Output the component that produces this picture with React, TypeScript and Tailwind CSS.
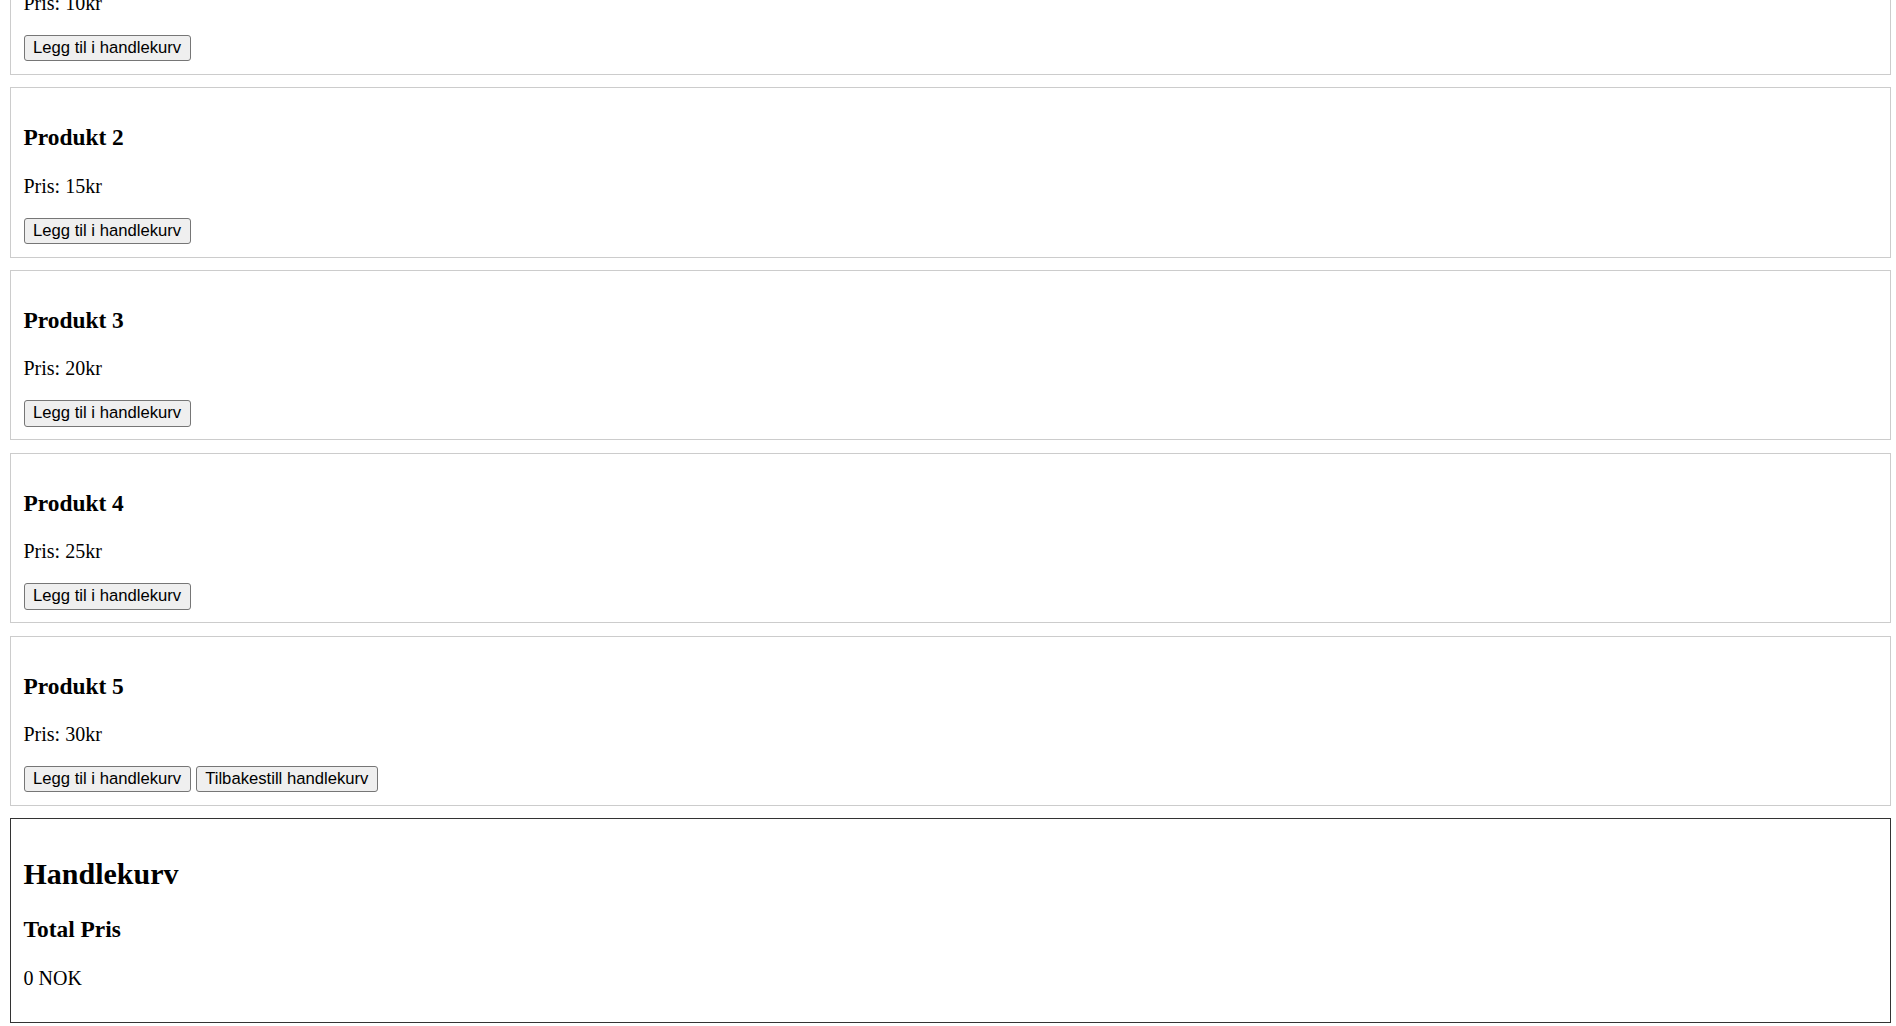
const products = [
  { id: 1, name: "Produkt 1", price: 10 },
  { id: 2, name: "Produkt 2", price: 15 },
  { id: 3, name: "Produkt 3", price: 20 },
  { id: 4, name: "Produkt 4", price: 25 },
  { id: 5, name: "Produkt 5", price: 30 },
];

const btn =
  "inline-block bg-[#efefef] border border-[#767676] rounded-[3px] px-[8.5px] py-[3px] text-[16.67px] leading-[18.5px] text-black font-['Liberation_Sans',Arial,sans-serif]";

const App = () => {
  return (
    <div className="w-full min-h-screen bg-white text-black font-['Liberation_Serif','Times_New_Roman',serif] overflow-hidden">
      <div className="ml-[10px] mr-[5px] mt-[-95.5px]">
        {products.map((p, i) => (
          <div key={p.id} className="border border-[#ccc] p-[12.5px] mb-[12.5px]">
            <h3 className="text-[23.4px] font-bold leading-[27px] mt-[23.4px]">{p.name}</h3>
            <p className="text-[20px] leading-[23px] mt-[23.4px]">Pris: {p.price}kr</p>
            <div className="mt-[20px] flex gap-[5px]">
              <button className={btn}>Legg til i handlekurv</button>
              {i === products.length - 1 && <button className={btn}>Tilbakestill handlekurv</button>}
            </div>
          </div>
        ))}
        <div className="border border-[#333] p-[12.5px]">
          <h2 className="text-[30px] font-bold leading-[34.5px] mt-[24.9px]">Handlekurv</h2>
          <h3 className="text-[23.4px] font-bold leading-[27px] mt-[24.9px]">Total Pris</h3>
          <p className="text-[20px] leading-[23px] mt-[23.4px] mb-[20px]">0 NOK</p>
        </div>
      </div>
    </div>
  );
};

export default App;
